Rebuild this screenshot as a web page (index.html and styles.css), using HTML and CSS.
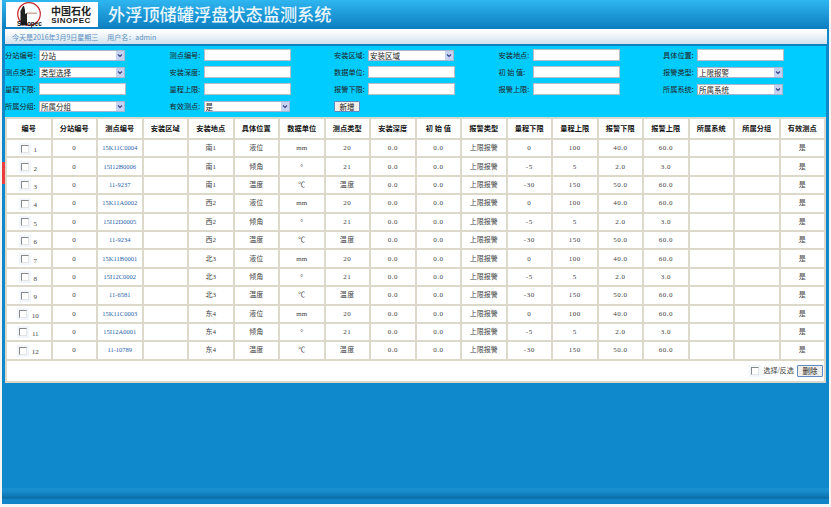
FILE: index.html
```html
<!DOCTYPE html>
<html lang="zh-CN">
<head>
<meta charset="utf-8">
<title>外浮顶储罐浮盘状态监测系统</title>
<link rel="stylesheet" href="styles.css">
</head>
<body>
<div class="page">
  <header class="masthead">
    <div class="logo">
      <svg class="logo-mark" viewBox="0 0 26 25" width="26" height="25" aria-hidden="true">
        <circle cx="13" cy="12" r="11.3" fill="none" stroke="#c8282c" stroke-width="1.2"/>
        <path d="M4.5 23V9L7 4l1 0 1 4v15zM9 12l2-1v12H9z" fill="#222"/>
        <path d="M11 10.5h10v1.6H11z" fill="#b98" opacity=".8"/>
      </svg>
      <span class="logo-sub">Sinopec</span>
      <div class="logo-names">
        <span class="logo-cn">中国石化</span>
        <span class="logo-en">SINOPEC</span>
      </div>
    </div>
    <h1 class="title">外浮顶储罐浮盘状态监测系统</h1>
  </header>
  <div class="infobar"><span>今天是2016年3月9日星期三</span><span>用户名：admin</span></div>
  <main class="content">
    <span class="edge-mark"></span>
    <form class="filters">
      <label class="field"><span class="lab">分站编号:</span><select class="ctl sel"><option>分站</option></select></label>
      <label class="field"><span class="lab">测点编号:</span><input class="ctl"></label>
      <label class="field"><span class="lab">安装区域:</span><select class="ctl sel"><option>安装区域</option></select></label>
      <label class="field"><span class="lab">安装地点:</span><input class="ctl"></label>
      <label class="field"><span class="lab">具体位置:</span><input class="ctl"></label>

      <label class="field"><span class="lab">测点类型:</span><select class="ctl sel"><option>类型选择</option></select></label>
      <label class="field"><span class="lab">安装深度:</span><input class="ctl"></label>
      <label class="field"><span class="lab">数据单位:</span><input class="ctl"></label>
      <label class="field"><span class="lab">初 始 值:</span><input class="ctl"></label>
      <label class="field"><span class="lab">报警类型:</span><select class="ctl sel"><option>上限报警</option></select></label>

      <label class="field"><span class="lab">量程下限:</span><input class="ctl"></label>
      <label class="field"><span class="lab">量程上限:</span><input class="ctl"></label>
      <label class="field"><span class="lab">报警下限:</span><input class="ctl"></label>
      <label class="field"><span class="lab">报警上限:</span><input class="ctl"></label>
      <label class="field"><span class="lab">所属系统:</span><select class="ctl sel"><option>所属系统</option></select></label>

      <label class="field"><span class="lab">所属分组:</span><select class="ctl sel"><option>所属分组</option></select></label>
      <label class="field"><span class="lab">有效测点:</span><select class="ctl sel"><option>是</option></select></label>
      <div class="field"><button type="button" class="btn add">新增</button></div>
    </form>
    <table class="grid">
      <thead>
        <tr><th>编号</th><th>分站编号</th><th>测点编号</th><th>安装区域</th><th>安装地点</th><th>具体位置</th><th>数据单位</th><th>测点类型</th><th>安装深度</th><th>初 始 值</th><th>报警类型</th><th>量程下限</th><th>量程上限</th><th>报警下限</th><th>报警上限</th><th>所属系统</th><th>所属分组</th><th>有效测点</th></tr>
      </thead>
      <tbody>
        <tr><td><input type="checkbox" class="chk"><span class="no">1</span></td><td>0</td><td class="code">15K11C0004</td><td></td><td>南1</td><td>液位</td><td>mm</td><td>20</td><td>0.0</td><td>0.0</td><td>上限报警</td><td>0</td><td>100</td><td>40.0</td><td>60.0</td><td></td><td></td><td>是</td></tr>
        <tr><td><input type="checkbox" class="chk"><span class="no">2</span></td><td>0</td><td class="code">15I12B0006</td><td></td><td>南1</td><td>倾角</td><td>°</td><td>21</td><td>0.0</td><td>0.0</td><td>上限报警</td><td>-5</td><td>5</td><td>2.0</td><td>3.0</td><td></td><td></td><td>是</td></tr>
        <tr><td><input type="checkbox" class="chk"><span class="no">3</span></td><td>0</td><td class="code">11-9237</td><td></td><td>南1</td><td>温度</td><td>℃</td><td>温度</td><td>0.0</td><td>0.0</td><td>上限报警</td><td>-30</td><td>150</td><td>50.0</td><td>60.0</td><td></td><td></td><td>是</td></tr>
        <tr><td><input type="checkbox" class="chk"><span class="no">4</span></td><td>0</td><td class="code">15K11A0002</td><td></td><td>西2</td><td>液位</td><td>mm</td><td>20</td><td>0.0</td><td>0.0</td><td>上限报警</td><td>0</td><td>100</td><td>40.0</td><td>60.0</td><td></td><td></td><td>是</td></tr>
        <tr><td><input type="checkbox" class="chk"><span class="no">5</span></td><td>0</td><td class="code">15I12D0005</td><td></td><td>西2</td><td>倾角</td><td>°</td><td>21</td><td>0.0</td><td>0.0</td><td>上限报警</td><td>-5</td><td>5</td><td>2.0</td><td>3.0</td><td></td><td></td><td>是</td></tr>
        <tr><td><input type="checkbox" class="chk"><span class="no">6</span></td><td>0</td><td class="code">11-9234</td><td></td><td>西2</td><td>温度</td><td>℃</td><td>温度</td><td>0.0</td><td>0.0</td><td>上限报警</td><td>-30</td><td>150</td><td>50.0</td><td>60.0</td><td></td><td></td><td>是</td></tr>
        <tr><td><input type="checkbox" class="chk"><span class="no">7</span></td><td>0</td><td class="code">15K11B0001</td><td></td><td>北3</td><td>液位</td><td>mm</td><td>20</td><td>0.0</td><td>0.0</td><td>上限报警</td><td>0</td><td>100</td><td>40.0</td><td>60.0</td><td></td><td></td><td>是</td></tr>
        <tr><td><input type="checkbox" class="chk"><span class="no">8</span></td><td>0</td><td class="code">15I12C0002</td><td></td><td>北3</td><td>倾角</td><td>°</td><td>21</td><td>0.0</td><td>0.0</td><td>上限报警</td><td>-5</td><td>5</td><td>2.0</td><td>3.0</td><td></td><td></td><td>是</td></tr>
        <tr><td><input type="checkbox" class="chk"><span class="no">9</span></td><td>0</td><td class="code">11-6581</td><td></td><td>北3</td><td>温度</td><td>℃</td><td>温度</td><td>0.0</td><td>0.0</td><td>上限报警</td><td>-30</td><td>150</td><td>50.0</td><td>60.0</td><td></td><td></td><td>是</td></tr>
        <tr><td><input type="checkbox" class="chk"><span class="no">10</span></td><td>0</td><td class="code">15K11C0003</td><td></td><td>东4</td><td>液位</td><td>mm</td><td>20</td><td>0.0</td><td>0.0</td><td>上限报警</td><td>0</td><td>100</td><td>40.0</td><td>60.0</td><td></td><td></td><td>是</td></tr>
        <tr><td><input type="checkbox" class="chk"><span class="no">11</span></td><td>0</td><td class="code">15I12A0001</td><td></td><td>东4</td><td>倾角</td><td>°</td><td>21</td><td>0.0</td><td>0.0</td><td>上限报警</td><td>-5</td><td>5</td><td>2.0</td><td>3.0</td><td></td><td></td><td>是</td></tr>
        <tr><td><input type="checkbox" class="chk"><span class="no">12</span></td><td>0</td><td class="code">11-10789</td><td></td><td>东4</td><td>温度</td><td>℃</td><td>温度</td><td>0.0</td><td>0.0</td><td>上限报警</td><td>-30</td><td>150</td><td>50.0</td><td>60.0</td><td></td><td></td><td>是</td></tr>
      </tbody>
      <tfoot>
        <tr><td colspan="18"><div class="actions"><label class="pick"><input type="checkbox" class="chk"><span>选择/反选</span></label><button type="button" class="btn del">删除</button></div></td></tr>
      </tfoot>
    </table>
  </main>
  <footer class="foot"></footer>
</div>
</body>
</html>
```
FILE: styles.css
```css
* { box-sizing: border-box; }
html, body { margin: 0; height: 100%; }
body {
  background: #f4f6f4;
  font-family: "Liberation Serif", "Noto Sans CJK SC", serif;
  overflow: hidden;
}
.page {
  width: 827px;
  height: 504px;
  margin: 0 2px;
  display: flex;
  flex-direction: column;
  background: #0f88cc;
}
.masthead {
  height: 29px;
  flex: none;
  display: flex;
  align-items: center;
  gap: 10px;
  padding: 0 0 0 4px;
  background: linear-gradient(#2eb6f0, #0d7dbf);
}
.logo {
  position: relative;
  width: 92px;
  height: 25px;
  background: #fff;
  display: flex;
  justify-content: flex-end;
  padding-right: 7px;
}
.logo-mark { position: absolute; left: 9.5px; top: 0; }
.logo-sub {
  position: absolute;
  left: 11px;
  top: 18px;
  height: 7px;
  font: bold 6.4px/7px "Liberation Sans", sans-serif;
  color: #111;
}
.logo-names { display: flex; flex-direction: column; align-items: center; padding-top: 4px; }
.logo-cn { font: bold 10px/9px "Noto Sans CJK SC", serif; color: #222; }
.logo-en { margin-top: 2px; font: bold 8px/8px "Liberation Sans", sans-serif; letter-spacing: .5px; color: #222; }
.title {
  margin: 0 0 1px;
  font: 500 17.2px/24px "Noto Sans CJK SC", sans-serif;
  color: #e8f6fd;
  white-space: nowrap;
}
.infobar {
  height: 17px;
  flex: none;
  margin: 0;
  padding: 0 0 2px 7px;
  display: flex;
  align-items: center;
  gap: 9px;
  border-left: 3px solid #0f88cc;
  border-right: 2px solid #0f88cc;
  background: linear-gradient(#fff 0, #fff 8%, #d2e2ee 88%, #1180c0 88%, #1180c0 100%);
  font: 7px/12px "Noto Sans CJK SC", sans-serif;
  color: #5c8fc0;
}
.content {
  flex: 1;
  padding: 0 3px;
  position: relative;
}
.edge-mark {
  position: absolute;
  left: 0;
  top: 116px;
  width: 3px;
  height: 22px;
  background: #ee3b3f;
}
.filters {
  height: 71px;
  padding: 3px 0 0;
  background: #00ccff;
  display: grid;
  grid-template-columns: repeat(5, 164.5px);
  grid-auto-rows: 17px;
  font: 7.2px/12px "Noto Sans CJK SC", sans-serif;
  color: #222;
}
.field { display: flex; align-items: center; height: 12px; }
.lab { width: 34px; flex: none; white-space: pre; }
.ctl {
  width: 87px;
  height: 12px;
  padding: 0 1px;
  border: 1px solid #b8bcc8;
  border-radius: 0;
  background: #fff;
  font: 7.5px/10px "Noto Sans CJK SC", sans-serif;
  color: #222;
  outline: none;
}
.sel {
  width: 86px;
  height: 11px;
  appearance: none;
  -webkit-appearance: none;
  border-color: #a8b4d0;
  background:
    url("data:image/svg+xml,%3Csvg xmlns='http://www.w3.org/2000/svg' width='8' height='9'%3E%3Crect width='8' height='9' fill='%23c6d2f2'/%3E%3Cpath d='M2 3.5l2 2 2-2' fill='none' stroke='%233a4a8a' stroke-width='1.2'/%3E%3C/svg%3E") right center no-repeat #fff;
}
.btn {
  padding: 0;
  background: #efeee8;
  font: 7.5px/9px "Noto Sans CJK SC", sans-serif;
  color: #222;
  border: 1px solid #5f88c4;
  border-radius: 1px;
}
.add { width: 26px; height: 11px; }
.del { width: 26px; height: 12px; margin-left: 3px; }
.grid {
  width: 821px;
  height: 264px;
  table-layout: fixed;
  border-collapse: collapse;
  background: #fff;
  font-size: 7px;
  line-height: 10px;
  color: #444;
  text-align: center;
}
.grid th, .grid td {
  padding: 0;
  border: 2px solid #dcd8ca;
  overflow: hidden;
}
.grid th { height: 21px; color: #111; font-weight: bold; font-size: 7.2px; }
.grid tbody td { height: 18.4px; }
.grid tbody td:nth-child(2),
.grid tbody td:nth-child(8),
.grid tbody td:nth-child(9),
.grid tbody td:nth-child(10),
.grid tbody td:nth-child(n+12):nth-child(-n+15) { letter-spacing: .5px; }
.grid .code { color: #2a5fa8; font-size: 6.5px; }
.chk {
  appearance: none;
  -webkit-appearance: none;
  width: 8px;
  height: 8px;
  margin: 0;
  background: #fff;
  border: 1px solid;
  border-color: #888 #e4e4e4 #e4e4e4 #888;
  outline: 2px solid #f0f6fb;
  vertical-align: middle;
}
.no { margin-left: 5px; position: relative; top: 2px; }
.grid tfoot td { height: 22px; padding: 0 1px 0 0; }
.actions {
  display: flex;
  justify-content: flex-end;
  align-items: center;
}
.pick { display: flex; align-items: center; gap: 4px; font-size: 7.2px; }
.foot {
  height: 16px;
  flex: none;
  background: linear-gradient(#1a8fd0 0, #1a8fd0 15%, #0f80bf 40%, #0c6ea6 65%, #0f85c8 70%, #0f85c8 100%);
}
```
